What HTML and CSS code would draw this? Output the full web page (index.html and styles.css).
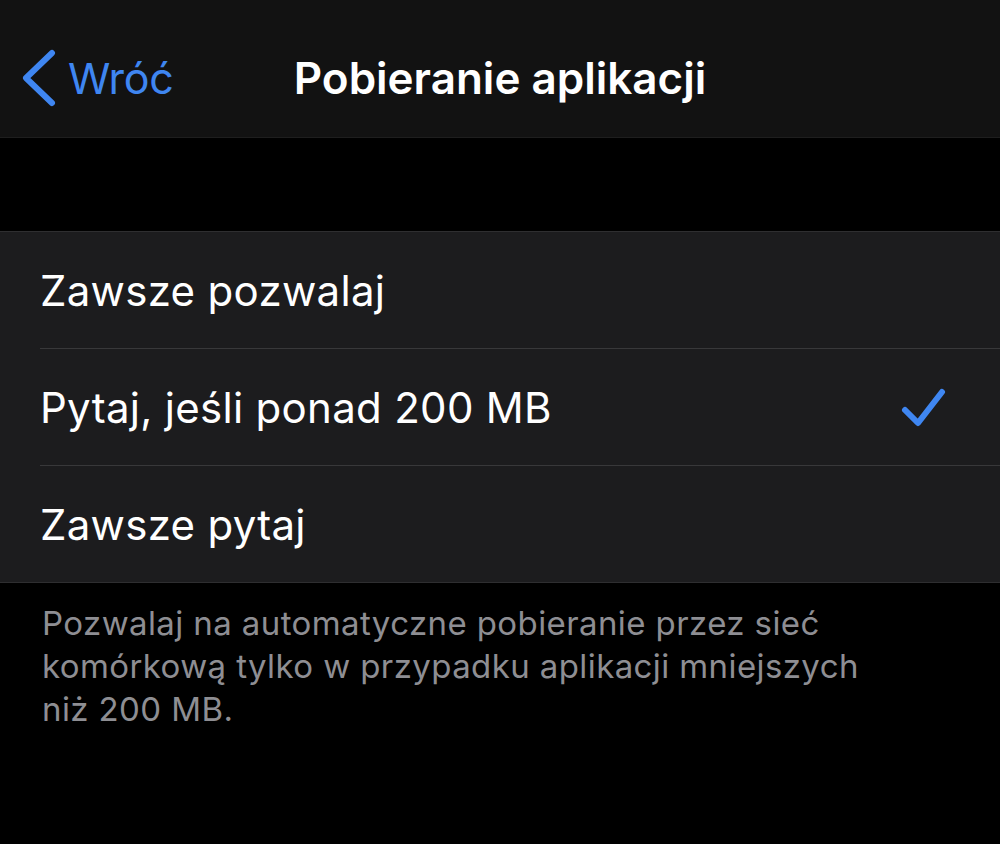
FILE: index.html
```html
<!DOCTYPE html>
<html lang="pl">
<head>
<meta charset="utf-8">
<link rel="stylesheet" href="styles.css">
</head>
<body>
<div class="screen">
  <header class="nav">
    <div class="back">
      <svg class="chev" width="36" height="60" viewBox="0 0 36 60"><path d="M32 5 L6 30 L32 55" fill="none" stroke="#3f86f1" stroke-width="6" stroke-linecap="round" stroke-linejoin="round"/></svg>
      <span class="back-text">Wróć</span>
    </div>
    <h1 class="title">Pobieranie aplikacji</h1>
  </header>
  <div class="gap"></div>
  <ul class="list">
    <li class="row"><span>Zawsze pozwalaj</span></li>
    <li class="row"><span>Pytaj, jeśli ponad 200 MB</span>
      <svg class="check" width="48" height="42" viewBox="0 0 48 42"><path d="M5 23 L18 36 L42 5" fill="none" stroke="#3f86f1" stroke-width="6" stroke-linecap="round" stroke-linejoin="round"/></svg>
    </li>
    <li class="row"><span>Zawsze pytaj</span></li>
  </ul>
  <p class="footer">Pozwalaj na automatyczne pobieranie przez sieć<br>komórkową tylko w przypadku aplikacji mniejszych<br>niż 200 MB.</p>
</div>
</body>
</html>
```
FILE: styles.css
```css
html, body {
  margin: 0;
  padding: 0;
  background: #000;
}
.screen {
  width: 1000px;
  height: 844px;
  background: #000;
  font-family: Inter, "Open Sans", "Liberation Sans", sans-serif;
  color: #fff;
  overflow: hidden;
}
.nav {
  box-sizing: border-box;
  height: 138px;
  padding-top: 18px;
  background: #121212;
  border-bottom: 1px solid #1e1e1e;
  display: flex;
  align-items: center;
  position: relative;
}
.back {
  display: flex;
  align-items: center;
  padding-left: 20px;
  gap: 12px;
}
.back-text {
  color: #3f86f1;
  font-size: 43px;
  letter-spacing: -0.3px;
}
.title {
  position: absolute;
  left: 0;
  right: 0;
  top: 18px;
  bottom: 0;
  margin: 0;
  display: flex;
  align-items: center;
  justify-content: center;
  font-size: 44px;
  font-weight: 600;
  letter-spacing: 0;
  pointer-events: none;
}
.gap {
  height: 93px;
}
.list {
  list-style: none;
  margin: 0;
  padding: 0 0 0 40px;
  background: #1c1c1e;
  border-top: 1px solid #2e2e30;
  border-bottom: 1px solid #2e2e30;
}
.row {
  height: 116px;
  display: flex;
  align-items: center;
  justify-content: space-between;
  padding-right: 52px;
  font-size: 42px;
  letter-spacing: 0.3px;
  border-bottom: 1px solid #38383a;
}
.row:last-child {
  border-bottom: none;
}
.check {
  margin-top: 2px;
}
.footer {
  margin: 19px 0 0 42px;
  font-size: 33px;
  line-height: 43px;
  color: #8e8e93;
  letter-spacing: 0.4px;
}
```
